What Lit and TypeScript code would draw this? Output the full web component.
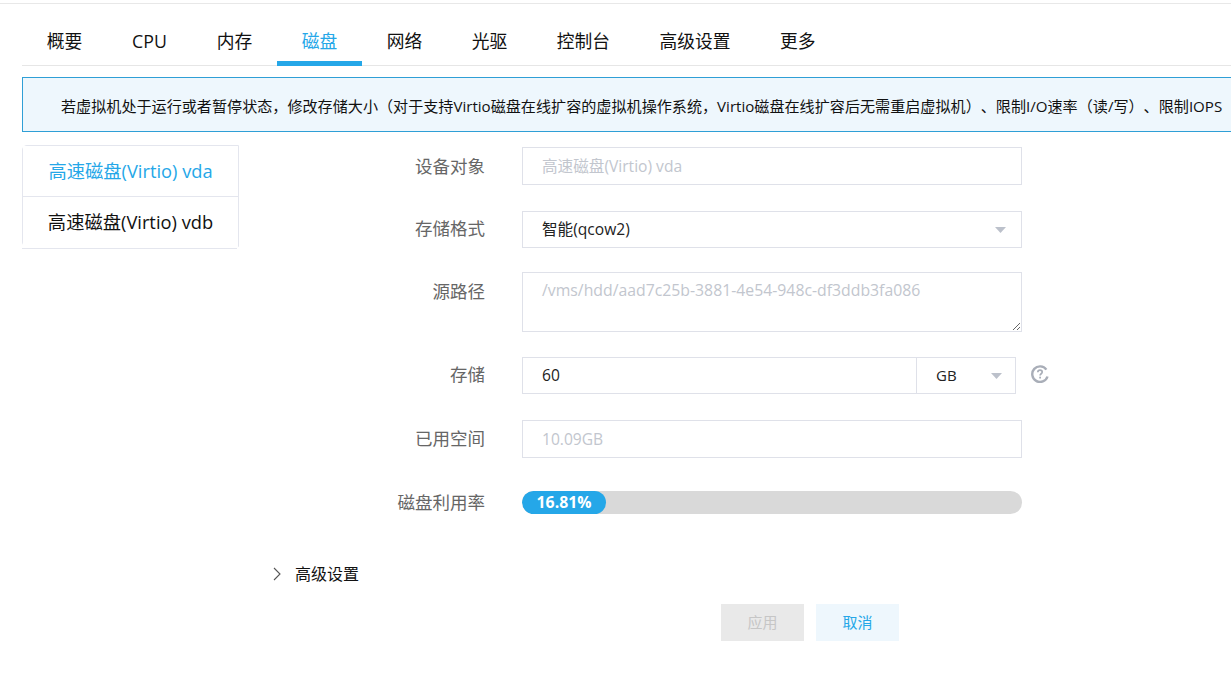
import { LitElement, html, css } from "lit";
import { customElement } from "lit/decorators.js";

const tabs = ["概要", "CPU", "内存", "磁盘", "网络", "光驱", "控制台", "高级设置", "更多"];

const caret = html`<svg class="caret" width="11" height="6" viewBox="0 0 11 6"><path d="M0 0H11L5.5 6Z" fill="#bcc1cb"/></svg>`;

@customElement("app-root")
export class AppRoot extends LitElement {
  static styles = css`
    :host {
      display: block;
      width: 1231px;
      height: 682px;
      overflow: hidden;
      background: #fff;
      box-sizing: border-box;
      padding-top: 3px;
      font-family: "Open Sans", "Noto Sans CJK SC", sans-serif;
      color: #111;
      text-spacing-trim: space-all;
    }
    .topline { height: 1px; background: #e8e8e8; }
    .tabs {
      display: flex;
      margin-left: 22px;
      height: 61px;
      border-bottom: 1px solid #e6e6e6;
      box-sizing: content-box;
    }
    .tab {
      flex: none;
      box-sizing: border-box;
      height: 62px;
      padding: 25px 24.75px 0;
      font-size: 17.75px;
      line-height: 25px;
      text-align: center;
      border-bottom: 5px solid transparent;
    }
    .tab.cpu { width: 85px; padding-left: 0; padding-right: 0; }
    .tab.active { color: #25a7e8; border-bottom-color: #25a7e8; }
    .banner {
      margin: 11px 0 0 22px;
      height: 55px;
      box-sizing: border-box;
      display: flex;
      align-items: center;
      padding-left: 38px;
      white-space: nowrap;
      font-size: 15.1px;
      background: #eef7fd;
      border: 1px solid #2f9fd6;
      border-right: none;
    }
    .content { display: flex; margin: 13px 0 0 22px; }
    .list { width: 217px; flex: none; height: 104px; }
    .item {
      box-sizing: border-box;
      height: 50px;
      padding-bottom: 2px;
      display: flex;
      align-items: center;
      justify-content: center;
      font-size: 18.3px;
      background: #fff;
    }
    .items {
      border: 1px solid #e4e6ee;
      border-radius: 5px 0 0 5px;
      height: 102px;
      box-sizing: border-box;
    }
    .item.active { height: 51px; color: #25a7e8; border-bottom: 1px solid #e4e6ee; }
    .under { height: 1px; margin-top: 1px; width: 215px; background: #e4e6ee; }
    .form { margin-top: 2px; width: 800px; }
    .row { display: flex; align-items: flex-start; }
    .row.r2 { margin-top: 26px; }
    .row.r3 { margin-top: 24px; }
    .row.r4 { margin-top: 25px; }
    .row.r5 { margin-top: 26px; }
    .row.r6 { margin-top: 33px; }
    .label {
      width: 246px;
      margin-right: 37px;
      flex: none;
      text-align: right;
      font-size: 17.5px;
      line-height: 38px;
      color: #666;
    }
    .row.r2 .label, .row.r4 .label { line-height: 35px; }
    .row.r5 .label { line-height: 37px; }
    .row.r6 .label { line-height: 23px; }
    .control {
      box-sizing: border-box;
      width: 500px;
      border: 1px solid #dfe1e9;
      background: #fff;
      padding: 0 19px;
      font-family: inherit;
      font-size: 15.6px;
      color: #222;
      outline: none;
      display: flex;
      align-items: center;
      justify-content: space-between;
      margin: 0;
    }
    input.control { height: 38px; }
    input.control::placeholder, textarea.control::placeholder { color: #c2c6ce; opacity: 1; }
    .select { height: 37px; padding-bottom: 2px; }
    .select .caret { margin: 2px -4px 0 0; }
    textarea.control {
      display: block;
      height: 60px;
      padding: 7px 19px;
      line-height: 20px;
      font-size: 15.8px;
    }
    .group { display: flex; align-items: center; }
    .group input.control { width: 394px; height: 37px; border-right: none; padding-bottom: 2px; }
    .unit {
      box-sizing: border-box;
      width: 100px;
      height: 37px;
      border: 1px solid #dfe1e9;
      display: flex;
      align-items: center;
      justify-content: space-between;
      padding: 0 13px 2px 19px;
      font-size: 15px;
      color: #222;
    }
    .unit .caret { margin-top: 3px; }
    .help { margin: 0 0 3px 15px; display: block; }
    .progress {
      width: 500px;
      height: 23px;
      border-radius: 12px;
      background: #d9d9d9;
      overflow: hidden;
    }
    .fill {
      height: 100%;
      border-radius: 12px;
      background: #25a7e8;
      color: #fff;
      font-weight: 700;
      font-size: 15.8px;
      line-height: 22px;
      text-align: center;
    }
    .advanced {
      display: flex;
      align-items: center;
      margin: 48px 0 0 34px;
      height: 22px;
      font-size: 16px;
      color: #111;
    }
    .advanced svg { margin: 2px 14px 0 0; }
    .actions {
      display: flex;
      gap: 12px;
      margin: 20px 0 0 482px;
    }
    .btn {
      width: 83px;
      height: 37px;
      padding-bottom: 2px;
      box-sizing: border-box;
      display: flex;
      align-items: center;
      justify-content: center;
      font-size: 15px;
    }
    .btn.apply { background: #e9e9e9; color: #c6c6c6; }
    .btn.cancel { background: #eef7fd; color: #25a7e8; }
  `;

  render() {
    return html`
      <div class="topline"></div>
      <div class="tabs">
        ${tabs.map(
          (t) => html`<div class="tab ${t === "磁盘" ? "active" : ""} ${t === "CPU" ? "cpu" : ""}">${t}</div>`
        )}
      </div>
      <div class="banner">若虚拟机处于运行或者暂停状态，修改存储大小（对于支持Virtio磁盘在线扩容的虚拟机操作系统，Virtio磁盘在线扩容后无需重启虚拟机）、限制I/O速率（读/写）、限制IOPS</div>
      <div class="content">
        <div class="list">
          <div class="items">
            <div class="item active">高速磁盘(Virtio) vda</div>
            <div class="item">高速磁盘(Virtio) vdb</div>
          </div>
          <div class="under"></div>
        </div>
        <div class="form">
          <div class="row">
            <div class="label">设备对象</div>
            <input class="control" placeholder="高速磁盘(Virtio) vda" readonly />
          </div>
          <div class="row r2">
            <div class="label">存储格式</div>
            <div class="control select"><span>智能(qcow2)</span>${caret}</div>
          </div>
          <div class="row r3">
            <div class="label">源路径</div>
            <textarea class="control" placeholder="/vms/hdd/aad7c25b-3881-4e54-948c-df3ddb3fa086" readonly></textarea>
          </div>
          <div class="row r4">
            <div class="label">存储</div>
            <div class="group">
              <input class="control" value="60" readonly />
              <div class="unit"><span>GB</span>${caret}</div>
              <svg class="help" width="18" height="18" viewBox="0 0 18 18" fill="none">
                <path d="M15.4 4.6A7.8 7.8 0 1 0 16.5 11.5" stroke="#a9aeb8" stroke-width="2.4"/>
                <path d="M6.8 7.2C6.9 5.9 7.8 5.2 9 5.2c1.3 0 2.2.8 2.2 1.9 0 1.6-2.1 1.7-2.1 3.4" stroke="#a9aeb8" stroke-width="1.7"/>
                <rect x="8.2" y="11.7" width="1.8" height="1.8" fill="#a9aeb8"/>
              </svg>
            </div>
          </div>
          <div class="row r5">
            <div class="label">已用空间</div>
            <input class="control" placeholder="10.09GB" readonly />
          </div>
          <div class="row r6">
            <div class="label">磁盘利用率</div>
            <div class="progress"><div class="fill" style="width:16.81%">16.81%</div></div>
          </div>
          <div class="advanced">
            <svg width="8" height="14" viewBox="0 0 8 14" fill="none"><path d="M1 1L7 7L1 13" stroke="#555" stroke-width="1.1"/></svg>
            <span>高级设置</span>
          </div>
          <div class="actions">
            <div class="btn apply">应用</div>
            <div class="btn cancel">取消</div>
          </div>
        </div>
      </div>
    `;
  }
}
